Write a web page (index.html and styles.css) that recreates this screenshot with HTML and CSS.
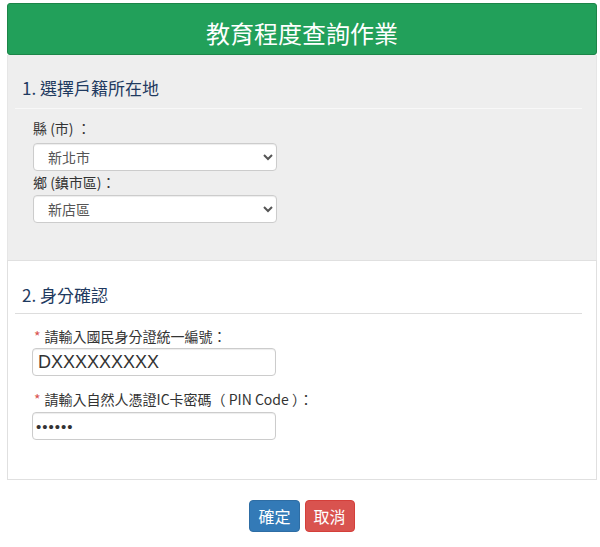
FILE: index.html
```html
<!DOCTYPE html>
<html lang="zh-Hant">
<head>
<meta charset="utf-8">
<title>教育程度查詢作業</title>
<link rel="stylesheet" href="styles.css">
</head>
<body>
<div class="page">
  <header class="title-bar">教育程度查詢作業</header>

  <section class="panel panel-gray">
    <h2 class="panel-heading">1. 選擇戶籍所在地</h2>
    <hr class="rule">
    <div class="form">
      <label class="field-label">縣 (市) ：</label>
      <select class="control select first">
        <option>新北市</option>
      </select>
      <label class="field-label">鄉 (鎮市區)：</label>
      <select class="control select second">
        <option>新店區</option>
      </select>
    </div>
  </section>

  <section class="panel panel-white">
    <h2 class="panel-heading">2. 身分確認</h2>
    <hr class="rule rule-gray">
    <div class="form form-id">
      <label class="field-label"><span class="req">*</span>請輸入國民身分證統一編號：</label>
      <input class="control text-input" type="text" value="DXXXXXXXXX">
      <label class="field-label second-label"><span class="req">*</span>請輸入自然人憑證IC卡密碼（ PIN Code ）：</label>
      <input class="control pin-input" type="password" value="123456">
    </div>
  </section>

  <div class="actions">
    <button class="btn btn-blue">確定</button>
    <button class="btn btn-red">取消</button>
  </div>
</div>
</body>
</html>
```

FILE: styles.css
```css
html, body {
  margin: 0;
  padding: 0;
  background: #ffffff;
}

body {
  font-family: "Noto Sans CJK TC", "Noto Sans", sans-serif;
  color: #333333;
}

.page {
  padding: 3px 3px 0 7px;
}

.title-bar {
  height: 42px;
  padding-top: 8px;
  border: 1px solid #1c8548;
  border-radius: 3px;
  background: #22a05a;
  color: #ffffff;
  font-size: 24px;
  line-height: 42px;
  text-align: center;
}

.panel {
  box-sizing: border-box;
  padding: 0 14px 0 7px;
}

.panel-gray {
  height: 205px;
  background: #eeeeee;
  border-left: 1px solid #e6e6e6;
  border-right: 1px solid #e6e6e6;
  padding-top: 21px;
}

.panel-white {
  height: 220px;
  border: 1px solid #e0e0e0;
  background: #ffffff;
  padding-top: 22px;
}

.panel-heading {
  margin: 0;
  padding-left: 7px;
  font-size: 17px;
  font-weight: normal;
  line-height: 24px;
  color: #1f3a60;
}

.rule {
  margin: 8px 0 0 0;
  border: 0;
  border-top: 1px solid #f8f8f8;
  height: 0;
}

.rule-gray {
  margin-top: 6px;
  border-top-color: #dddddd;
}

.form {
  display: flex;
  flex-direction: column;
  align-items: flex-start;
  padding-left: 18px;
  padding-top: 9px;
}

.form-id {
  padding-top: 12px;
  padding-left: 17px;
}

.field-label {
  font-size: 14px;
  line-height: 20px;
  color: #333333;
}

.req {
  color: #d9534f;
  margin: 0 4px 0 2px;
}

.control {
  box-sizing: border-box;
  width: 244px;
  height: 28px;
  border: 1px solid #cccccc;
  border-radius: 4px;
  background: #ffffff;
  box-shadow: inset 0 1px 1px rgba(0, 0, 0, 0.075);
}

.select {
  font-family: "Noto Sans CJK TC", sans-serif;
  font-size: 14px;
  color: #555555;
  padding: 0 4px 0 10px;
}

.select.first {
  margin: 5px 0 1px 0;
}

.select.second {
  margin-top: 3px;
}

.text-input {
  margin-top: 2px;
  padding: 0 5px;
  font-family: "Liberation Sans", Arial, sans-serif;
  font-size: 18px;
  color: #333333;
}

.second-label {
  margin-top: 13px;
}

.pin-input {
  margin-top: 3px;
  padding: 0 3px;
  font-family: "Liberation Sans", Arial, sans-serif;
  font-size: 15px;
  letter-spacing: 1px;
  color: #333333;
}

.actions {
  display: flex;
  justify-content: center;
  gap: 5px;
  margin-top: 20px;
}

.btn {
  box-sizing: border-box;
  height: 32px;
  padding: 0 8px;
  border-radius: 4px;
  font-family: "Noto Sans CJK TC", sans-serif;
  font-size: 16px;
  color: #ffffff;
  cursor: pointer;
}

.btn-blue {
  background: #337ab7;
  border: 1px solid #2e6da4;
}

.btn-red {
  background: #d9534f;
  border: 1px solid #d43f3a;
}
```
